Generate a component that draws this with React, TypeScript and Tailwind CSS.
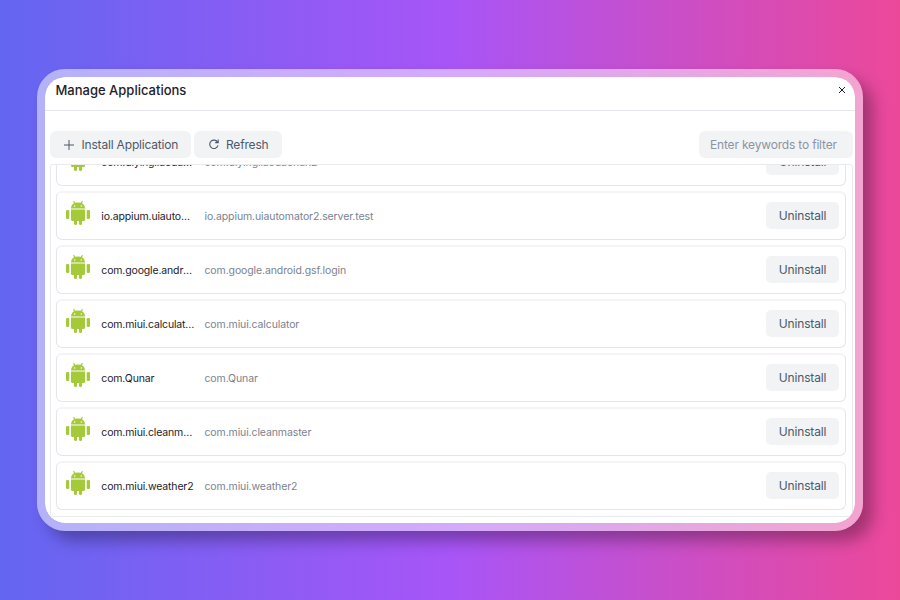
const rows = [
  ['com.diyingliaodaohan', 'com.diyingliaodaohan2'],
  ['io.appium.uiautomator2.server.test', 'io.appium.uiautomator2.server.test'],
  ['com.google.android.gsf.login', 'com.google.android.gsf.login'],
  ['com.miui.calculator', 'com.miui.calculator'],
  ['com.Qunar', 'com.Qunar'],
  ['com.miui.cleanmaster', 'com.miui.cleanmaster'],
  ['com.miui.weather2', 'com.miui.weather2'],
];

function AndroidIcon() {
  return (
    <svg className="mb-[7px] ml-[9px] h-6 w-6 shrink-0" viewBox="0 0 24 24" fill="#a4ca39">
      <path d="M5 7.6C5 5 6.4 3.2 8.1 2.3L7 .4Q7.5-.3 8.2.2L9.2 1.8Q12 1.2 14.8 1.8L15.8.2Q16.5-.3 17 .4L15.9 2.3C17.6 3.2 19 5 19 7.6Z" />
      <circle cx="8.7" cy="4.9" r=".75" fill="white" />
      <circle cx="15.3" cy="4.9" r=".75" fill="white" />
      <rect x="0" y="9" width="3.3" height="9" rx="1.3" />
      <rect x="20.7" y="9" width="3.3" height="9" rx="1.3" />
      <path d="M5 8.6H19V18.7Q19 20 17.5 20H16V22.7Q16 24 14.5 24T13 22.7V20H11V22.7Q11 24 9.5 24T8 22.7V20H6.5Q5 20 5 18.7Z" />
    </svg>
  );
}

function AppRow({ name, id }: { name: string; id: string }) {
  return (
    <div className="flex h-[49px] shrink-0 items-center rounded-md border border-t-2 border-[#e5e6eb] border-t-[#f4f4f6] bg-white pr-[6px]">
      <AndroidIcon />
      <span className="ml-[11.3px] w-[93.7px] truncate pt-px text-[10.5px] tracking-[-0.15px] text-[#1d2129]">{name}</span>
      <span className="ml-[9.5px] flex-1 pt-px text-[10.5px] tracking-[-0.11px] text-[#7b8290]">{id}</span>
      <button className="mb-[2px] h-[27px] w-[73px] rounded-[5px] bg-[#f2f3f5] pt-px text-[12px] tracking-[-0.15px] text-[#4e5969]">Uninstall</button>
    </div>
  );
}

export default function App() {
  return (
    <div className="flex h-[600px] w-[900px] items-center justify-center bg-[linear-gradient(90deg,#6366f1,#a855f7_50%,#ec4899)] font-['Inter',sans-serif]">
      <div className="h-[462px] w-[826px] rounded-[28px] border-8 border-white/50 shadow-[10px_10px_15px_rgba(0,0,0,0.3)]">
        <div className="flex h-full flex-col overflow-hidden rounded-[20px] bg-white">
          <header className="flex h-[34px] shrink-0 items-center justify-between border-b border-[#e5e6eb] pr-[9px] pb-[6px] pl-[10.5px]">
            <h1 className="text-[13px] font-medium text-[#1d2129]">Manage Applications</h1>
            <svg className="mb-[2px] h-2 w-2" viewBox="0 0 8 8" fill="none" stroke="#1d2129" strokeWidth="1">
              <path d="M1 1L7 7M7 1L1 7" />
            </svg>
          </header>
          <div className="mt-5 flex h-[27px] shrink-0 items-center pr-[2px] pl-[5px] text-[12px] tracking-[-0.18px] text-[#4e5969]">
            <button className="flex h-full w-[141px] items-center rounded-md bg-[#f2f3f5] pl-[14px]">
              <svg className="mr-[7.5px] h-[10px] w-[10px] shrink-0" viewBox="0 0 10 10" stroke="#4e5969" strokeWidth="1">
                <path d="M5 0V10M0 5H10" />
              </svg>
              <span className="pt-px">Install Application</span>
            </button>
            <button className="ml-[3px] flex h-full w-[88px] items-center rounded-md bg-[#f2f3f5] pl-[14.5px]">
              <svg className="mr-[7.5px] mb-px h-[10px] w-[10px] shrink-0" viewBox="0 0 10 10" fill="none" stroke="#4e5969" strokeWidth="1.1">
                <path d="M8.7 3.4A4.2 4.2 0 1 0 9 6.4M9.2.6V3.6H6.2" />
              </svg>
              <span className="pt-px">Refresh</span>
            </button>
            <div className="ml-auto flex h-full w-[154px] items-center rounded-md bg-[#f2f3f5] pt-px pl-[11px] text-[#8b94a3]">Enter keywords to filter</div>
          </div>
          <div className="mt-[6px] mr-[2px] ml-[5px] flex h-[353px] shrink-0 flex-col justify-end gap-[5px] overflow-hidden rounded-[3px] border border-[#e9eaee] pr-[6px] pb-[6px] pl-[5px]">
            {rows.map(([name, id]) => (
              <AppRow key={id} name={name} id={id} />
            ))}
          </div>
        </div>
      </div>
    </div>
  );
}
